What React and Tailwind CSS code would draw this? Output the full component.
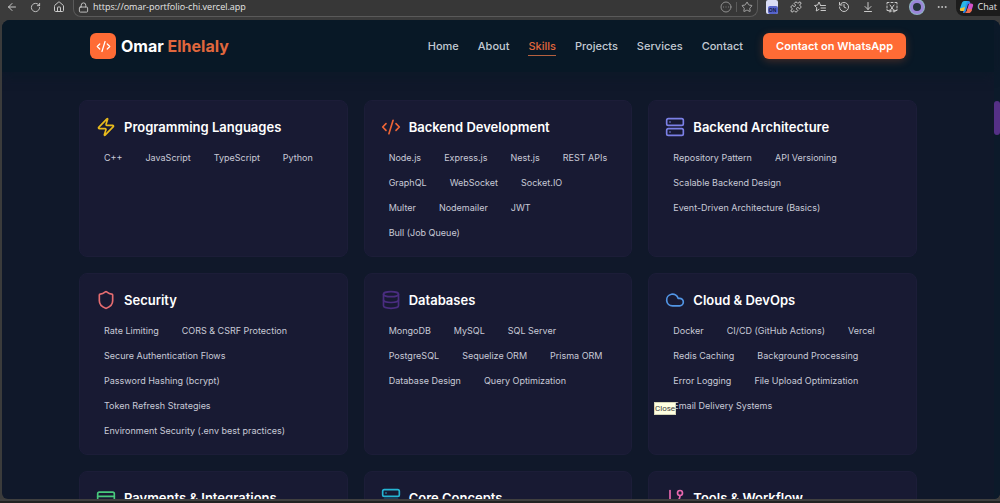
import {
  ArrowLeft,
  RotateCw,
  House,
  Lock,
  CircleEllipsis,
  Star,
  Puzzle,
  History,
  ArrowDownToLine,
  Ellipsis,
  CodeXml,
  Zap,
  Server,
  Shield,
  Database,
  Cloud,
  CreditCard,
  GitBranch,
} from 'lucide-react';

const navLinks = ['Home', 'About', 'Skills', 'Projects', 'Services', 'Contact'];

const skillGroups = [
  {
    title: 'Programming Languages',
    icon: Zap,
    color: 'text-[#e9bb1c]',
    skills: ['C++', 'JavaScript', 'TypeScript', 'Python'],
  },
  {
    title: 'Backend Development',
    icon: CodeXml,
    color: 'text-[#ec6436]',
    skills: ['Node.js', 'Express.js', 'Nest.js', 'REST APIs', 'GraphQL', 'WebSocket', 'Socket.IO', 'Multer', 'Nodemailer', 'JWT', 'Bull (Job Queue)'],
  },
  {
    title: 'Backend Architecture',
    icon: Server,
    color: 'text-[#7b80e6]',
    skills: ['Repository Pattern', 'API Versioning', 'Scalable Backend Design', 'Event-Driven Architecture (Basics)'],
  },
  {
    title: 'Security',
    icon: Shield,
    color: 'text-[#e56c70]',
    skills: ['Rate Limiting', 'CORS & CSRF Protection', 'Secure Authentication Flows', 'Password Hashing (bcrypt)', 'Token Refresh Strategies', 'Environment Security (.env best practices)'],
  },
  {
    title: 'Databases',
    icon: Database,
    color: 'text-[#4a2d80]',
    skills: ['MongoDB', 'MySQL', 'SQL Server', 'PostgreSQL', 'Sequelize ORM', 'Prisma ORM', 'Database Design', 'Query Optimization'],
  },
  {
    title: 'Cloud & DevOps',
    icon: Cloud,
    color: 'text-[#5296e6]',
    skills: ['Docker', 'CI/CD (GitHub Actions)', 'Vercel', 'Redis Caching', 'Background Processing', 'Error Logging', 'File Upload Optimization', 'Email Delivery Systems'],
  },
  { title: 'Payments & Integrations', icon: CreditCard, color: 'text-[#48c97c]', skills: [] },
  { title: 'Core Concepts', icon: Server, color: 'text-[#25b5d3]', skills: [] },
  { title: 'Tools & Workflow', icon: GitBranch, color: 'text-[#e868ae]', skills: [] },
];

function IconButton({ label, children }) {
  return (
    <button type="button" aria-label={label} className="shrink-0 flex items-center justify-center text-[#c9c9c9]">
      {children}
    </button>
  );
}

function FavoritesIcon() {
  return (
    <svg width="12" height="12" viewBox="0 0 24 24" fill="none" stroke="currentColor" strokeWidth="2" strokeLinecap="round" strokeLinejoin="round">
      <path d="M13 8.5 10 2 7.2 8.2 1 9l4.600 4.400L4.500 20l5.500-3.200" />
      <path d="M13 9h10M14 14h9M14 19h9" />
    </svg>
  );
}

function CaptureIcon() {
  return (
    <svg width="12" height="12" viewBox="0 0 24 24" fill="none" stroke="currentColor" strokeWidth="2" strokeLinecap="round">
      <path d="M2 6V3h4M10 3h4M18 3h4v3M22 10v4M2 10v4M2 17v2h3M22 17v2h-3" />
      <path d="m8 8 7 10M16 8 9 18" />
      <circle cx="8" cy="20" r="2" />
      <circle cx="16" cy="20" r="2" />
    </svg>
  );
}

function CopilotIcon() {
  return (
    <svg width="15" height="14" viewBox="0 0 30 28">
      <path d="M11 2h8c3 0 3 2 4 5l-5 1-4 13c-1 4-3 5-6 5l3-14z" fill="#2b8ef0" />
      <path d="M11 2C7 2 6 5 5 8L2 17c-1 4 1 5 4 5h4l5-16c1-3 2-4 4-4z" fill="#28b6e8" />
      <path d="M2 17c-1 4 1 5 4 5h4l2-8z" fill="#f2c230" />
      <path d="M19 26h-8c3 0 4-2 5-5l4-14h4c4 0 5 2 4 5l-3 9c-1 3-3 5-6 5z" fill="#d452c8" />
      <path d="M19 26h-8c3 0 4-2 5-5l1-4 9 2c-1 4-3 7-7 7z" fill="#f0704c" />
    </svg>
  );
}

function BrowserBar() {
  return (
    <div className="h-5 shrink-0 flex items-start justify-between bg-[#3b3b3b] pl-1.5 overflow-hidden">
      <div className="h-3.5 flex items-center gap-3">
        <IconButton label="Back"><ArrowLeft size={12} /></IconButton>
        <IconButton label="Refresh"><RotateCw size={11} /></IconButton>
        <IconButton label="Home"><House size={12} /></IconButton>
      </div>
      <div className="h-[18px] -mt-px ml-2 flex-1 flex items-start justify-between rounded-b-lg border border-t-0 border-[#5a5a5a] bg-[#373737] px-1">
        <div className="h-4 flex items-center gap-1">
          <Lock size={11} className="text-[#c9c9c9]" />
          <input
            type="text"
            aria-label="Address"
            readOnly
            value="https://omar-portfolio-chi.vercel.app"
            className="w-60 bg-transparent font-['Open_Sans','Noto_Sans',sans-serif] text-[9px] leading-4 text-[#e6e6e6] outline-none"
          />
        </div>
        <div className="h-4 flex items-center gap-1">
          <IconButton label="More"><CircleEllipsis size={12} className="text-[#8f8f8f]" /></IconButton>
          <span className="w-px h-2.5 bg-[#5a5a5a]" />
          <IconButton label="Favorite"><Star size={12} className="text-[#a5a5a5]" /></IconButton>
        </div>
      </div>
      <div className="h-3.5 flex items-center gap-3 pl-2">
        <button type="button" aria-label="Extension" className="w-3 h-3.5 flex items-end justify-end rounded-xs bg-[#d9dcf5]">
          <span className="w-2.5 h-2 rounded-xs bg-[#5663c9] text-center font-['Liberation_Sans',sans-serif] text-[5px] font-bold leading-2 text-[#14193f]">ON</span>
        </button>
        <IconButton label="Extensions"><Puzzle size={12} /></IconButton>
        <IconButton label="Favorites list"><FavoritesIcon /></IconButton>
        <IconButton label="History"><History size={12} /></IconButton>
        <IconButton label="Downloads"><ArrowDownToLine size={12} /></IconButton>
        <IconButton label="Capture"><CaptureIcon /></IconButton>
        <button type="button" aria-label="Profile" className="size-3.5 rounded-full border-3 border-[#9a86d8] bg-[#26343c] ring-1 ring-[#8fb5c4]" />
        <IconButton label="Settings"><Ellipsis size={12} /></IconButton>
        <button type="button" className="h-[17px] -ml-1 flex items-center gap-1 rounded-bl-lg bg-[#1c1c1c] px-[3px] font-['Open_Sans','Noto_Sans',sans-serif] text-[9px] text-[#e6e6e6]">
          <CopilotIcon />
          Chat
        </button>
      </div>
    </div>
  );
}

function Navbar() {
  return (
    <header className="h-[52px] shrink-0 bg-[#081826] shadow-[0_4px_10px_#0c1928] z-10">
      <div className="h-full w-full max-w-[816px] mx-auto flex items-center justify-between">
        <a href="#home" className="flex items-center gap-[5px]">
          <span className="size-[26px] rounded-md bg-[#ff6b35] flex items-center justify-center text-white">
            <CodeXml size={15} />
          </span>
          <span className="text-base font-bold text-white">
            Omar <span className="text-[#e0673d]">Elhelaly</span>
          </span>
        </a>
        <div className="flex items-center gap-5">
          <nav className="flex items-center gap-[19px]">
            {navLinks.map((link) => (
              <a
                key={link}
                href={`#${link.toLowerCase()}`}
                className={`relative text-[11px] leading-5 font-medium ${link === 'Skills' ? 'text-[#e0673d]' : 'text-[#c3cad3]'}`}
              >
                {link}
                {link === 'Skills' && <span className="absolute left-0 right-0 bottom-0 h-px bg-[#b5603f]" />}
              </a>
            ))}
          </nav>
          <button type="button" className="h-[26px] px-[13px] rounded-md bg-[#ff6b35] text-[11px] font-semibold text-white shadow-[0_2px_8px_#ff6b3540]">
            Contact on WhatsApp
          </button>
        </div>
      </div>
    </header>
  );
}

function SkillCard({ group }) {
  const Icon = group.icon;
  return (
    <article className="rounded-lg border border-[#1c1d38] bg-[#181a33] px-4 pt-4 pb-[15px]">
      <div className="flex items-center gap-2 mb-3">
        <Icon size={20} className={group.color} />
        <h3 className="text-[13px] leading-5 font-semibold text-white">{group.title}</h3>
      </div>
      <ul className="flex flex-wrap gap-x-[7px] gap-y-2">
        {group.skills.map((skill) => (
          <li key={skill} className="px-2 text-[9px] leading-[17px] text-[#c8cad7]">{skill}</li>
        ))}
      </ul>
    </article>
  );
}

export default function App() {
  return (
    <div className="h-screen flex flex-col overflow-hidden bg-[#3b3b3b] font-['Inter',sans-serif]">
      <BrowserBar />
      <div className="flex-1 min-h-0 ml-0.5 flex rounded-t-lg rounded-b-md overflow-hidden bg-[#10182a]">
        <div className="flex-1 min-w-0 flex flex-col">
          <Navbar />
          <main className="flex-1 min-h-0 overflow-hidden pt-7">
            <div className="w-full max-w-[838px] mx-auto grid grid-cols-3 gap-4">
              {skillGroups.map((group) => (
                <SkillCard key={group.title} group={group} />
              ))}
            </div>
          </main>
        </div>
        {/* scrollbar */}
        <div className="w-1.5 shrink-0 bg-[#0c1a2a] pt-[81px]">
          <div className="h-[34px] rounded-sm bg-[#553086]" />
        </div>
      </div>
      <div className="h-1 shrink-0 border-t-2 border-[#3f3f3f] bg-[#222222]" />
      <div role="tooltip" className="absolute left-[654px] top-[402px] border border-[#d5d5b8] bg-[#ffffe1] font-['Roboto',sans-serif] text-[8px] leading-[11px] text-[#3c3c3c]">
        Close
      </div>
    </div>
  );
}
